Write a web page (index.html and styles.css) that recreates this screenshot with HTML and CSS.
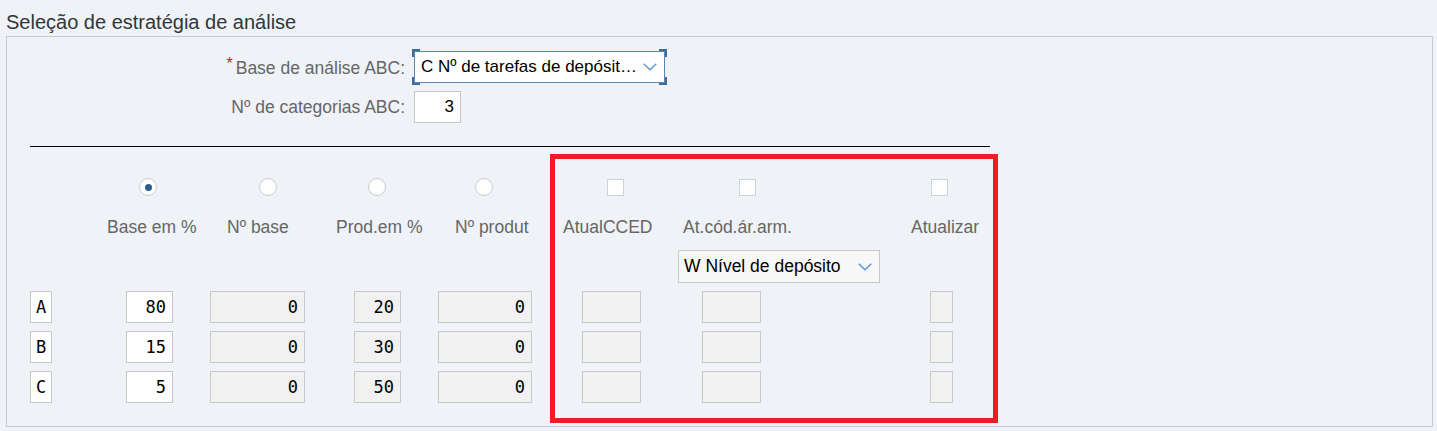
FILE: index.html
```html
<!DOCTYPE html>
<html lang="pt">
<head>
    <meta charset="UTF-8">
    <meta name="viewport" content="width=device-width, initial-scale=1.0">
    <title>Estratégia de análise ABC</title>
    <link rel="stylesheet" href="styles.css">
</head>
<body>
    <h1 class="title">Seleção de estratégia de análise</h1>

    <section class="panel">
        <div class="form">
            <label class="form-label"><span class="req">*</span>Base de análise ABC:</label>
            <div class="focus-frame">
                <div class="select">
                    <span class="select-text">C Nº de tarefas de depósit…</span>
                    <svg class="chev" width="14" height="8" viewBox="0 0 14 8"><polyline points="0.7,0.7 7,6.8 13.3,0.7" /></svg>
                </div>
            </div>
            <label class="form-label">Nº de categorias ABC:</label>
            <div class="field edit num-count">3</div>
        </div>

        <div class="rule"></div>

        <div class="abc-grid">
            <!-- radio / checkbox row -->
            <span class="radio on c2"></span>
            <span class="radio c3"></span>
            <span class="radio c4"></span>
            <span class="radio c5"></span>
            <span class="check c6"></span>
            <span class="check c7"></span>
            <span class="check c8"></span>

            <!-- headings -->
            <span class="head c2">Base em %</span>
            <span class="head c3">Nº base</span>
            <span class="head c4">Prod.em %</span>
            <span class="head c5">Nº produt</span>
            <span class="head c6">AtualCCED</span>
            <span class="head c7">At.cód.ár.arm.</span>
            <span class="head c8">Atualizar</span>

            <div class="select small c7">
                <span class="select-text">W Nível de depósito</span>
                <svg class="chev" width="14" height="8" viewBox="0 0 14 8"><polyline points="0.7,0.7 7,6.8 13.3,0.7" /></svg>
            </div>

            <!-- A -->
            <span class="field edit letter c1">A</span>
            <span class="field edit c2">80</span>
            <span class="field ro c3">0</span>
            <span class="field ro c4">20</span>
            <span class="field ro c5">0</span>
            <span class="field ro c6"></span>
            <span class="field ro c7"></span>
            <span class="field ro c8"></span>

            <!-- B -->
            <span class="field edit letter c1">B</span>
            <span class="field edit c2">15</span>
            <span class="field ro c3">0</span>
            <span class="field ro c4">30</span>
            <span class="field ro c5">0</span>
            <span class="field ro c6"></span>
            <span class="field ro c7"></span>
            <span class="field ro c8"></span>

            <!-- C -->
            <span class="field edit letter c1">C</span>
            <span class="field edit c2">5</span>
            <span class="field ro c3">0</span>
            <span class="field ro c4">50</span>
            <span class="field ro c5">0</span>
            <span class="field ro c6"></span>
            <span class="field ro c7"></span>
            <span class="field ro c8"></span>
        </div>

        <div class="highlight"></div>
    </section>
</body>
</html>
```

FILE: styles.css
```css
body {
    margin: 0;
    background-color: #eff3f7;
    font-family: 'Liberation Sans', Arial, sans-serif;
    color: #333;
}
.title {
    margin: 0;
    padding: 10px 0 0 6px;
    font-size: 20px;
    font-weight: normal;
    line-height: 24px;
    color: #32363a;
}
.panel {
    position: relative;
    box-sizing: border-box;
    width: 1427px;
    height: 391px;
    margin: 2px 0 0 6px;
    border: 1px solid #cacaca;
}

/* top form */
.form {
    display: grid;
    grid-template-columns: 398px auto;
    grid-auto-rows: 32px;
    column-gap: 9px;
    row-gap: 8px;
    padding-top: 14px;
    align-items: center;
}
.form-label {
    justify-self: end;
    font-size: 17.5px;
    color: #666;
}
.req {
    color: #cc1919;
    font-size: 16px;
    vertical-align: 5px;
    margin-right: 3px;
}
.focus-frame {
    position: relative;
    justify-self: start;
}
.focus-frame::before {
    content: "";
    position: absolute;
    inset: -2px;
    pointer-events: none;
    background:
        linear-gradient(#3f6d99, #3f6d99) left top / 8px 2px no-repeat,
        linear-gradient(#3f6d99, #3f6d99) left top / 2px 8px no-repeat,
        linear-gradient(#3f6d99, #3f6d99) right top / 8px 2px no-repeat,
        linear-gradient(#3f6d99, #3f6d99) right top / 2px 8px no-repeat,
        linear-gradient(#3f6d99, #3f6d99) left bottom / 8px 2px no-repeat,
        linear-gradient(#3f6d99, #3f6d99) left bottom / 2px 8px no-repeat,
        linear-gradient(#3f6d99, #3f6d99) right bottom / 8px 2px no-repeat,
        linear-gradient(#3f6d99, #3f6d99) right bottom / 2px 8px no-repeat;
}
.select {
    box-sizing: border-box;
    display: flex;
    align-items: center;
    justify-content: space-between;
    width: 251px;
    height: 32px;
    padding: 0 7px 0 6px;
    background: #fff;
    border: 1px solid #5b86b4;
    color: #000;
    font-size: 17px;
    white-space: nowrap;
}
.chev {
    flex: none;
}
.chev polyline {
    fill: none;
    stroke: #5a96d0;
    stroke-width: 1.4;
}
.select.small {
    width: 202px;
    height: 33px;
    padding: 0 7px 0 5px;
    background: #f7f7f7;
    border-color: #c8c8c8;
    font-size: 17.5px;
}

.field {
    box-sizing: border-box;
    display: flex;
    align-items: center;
    justify-content: flex-end;
    height: 32px;
    padding: 0 6px;
    border: 1px solid #c8c8c8;
    font-family: 'DejaVu Sans Mono', 'Liberation Mono', monospace;
    font-size: 17px;
    color: #000;
}
.field.edit { background: #fff; }
.field.ro { background: #f1f1f1; }
.num-count {
    width: 47px;
    font-family: 'Liberation Sans', Arial, sans-serif;
    font-size: 17px;
}

.rule {
    width: 960px;
    height: 1px;
    margin: 23px 0 0 23px;
    background: #000;
}

/* ABC classes table */
.abc-grid {
    display: grid;
    grid-template-columns: 77px 103px 126px 102px 125px 115px 233px 79px;
    grid-template-rows: 18px 40px 47px repeat(3, 40px);
    align-items: end;
    justify-items: start;
    margin: 31px 0 0 23px;
    width: 960px;
}
.c1 { grid-column: 1; }
.c2 { grid-column: 2; }
.c3 { grid-column: 3; }
.c4 { grid-column: 4; }
.c5 { grid-column: 5; }
.c6 { grid-column: 6; }
.c7 { grid-column: 7; }
.c8 { grid-column: 8; }

.radio {
    box-sizing: border-box;
    width: 18px;
    height: 18px;
    border: 1px solid #c9c9c9;
    border-radius: 50%;
    background: #fff;
    display: flex;
    align-items: center;
    justify-content: center;
}
.radio.on::after {
    content: "";
    width: 7px;
    height: 7px;
    border-radius: 50%;
    background: #2b5d90;
}
.radio.c2 { margin-left: 32px; }
.radio.c3 { margin-left: 49px; }
.radio.c4 { margin-left: 32px; }
.radio.c5 { margin-left: 37px; }

.check {
    box-sizing: border-box;
    width: 17px;
    height: 17px;
    align-self: center;
    border: 1px solid #ccd2d8;
    background: #fff;
}
.check.c6 { margin-left: 44px; }
.check.c7 { margin-left: 61px; }
.check.c8 { margin-left: 20px; }

.head {
    font-size: 17.5px;
    line-height: 18px;
    color: #666;
    white-space: nowrap;
}
.head.c3 { margin-left: 17px; }
.head.c5 { margin-left: 17px; }
.head.c7 { margin-left: 5px; }

.field.letter {
    width: 22px;
    justify-content: center;
    padding: 0;
}
.field.c2 { width: 47px; margin-left: 19px; }
.field.c3 { width: 95px; }
.field.c4 { width: 47px; margin-left: 18px; }
.field.c5 { width: 94px; }
.field.c6 { width: 59px; margin-left: 19px; }
.field.c7 { width: 59px; margin-left: 24px; }
.field.c8 { width: 23px; margin-left: 19px; }

/* red frame drawn over the update columns */
.highlight {
    position: absolute;
    left: 543px;
    top: 117px;
    width: 448px;
    height: 269px;
    box-sizing: border-box;
    border: 5px solid #ee1c25;
}
```
